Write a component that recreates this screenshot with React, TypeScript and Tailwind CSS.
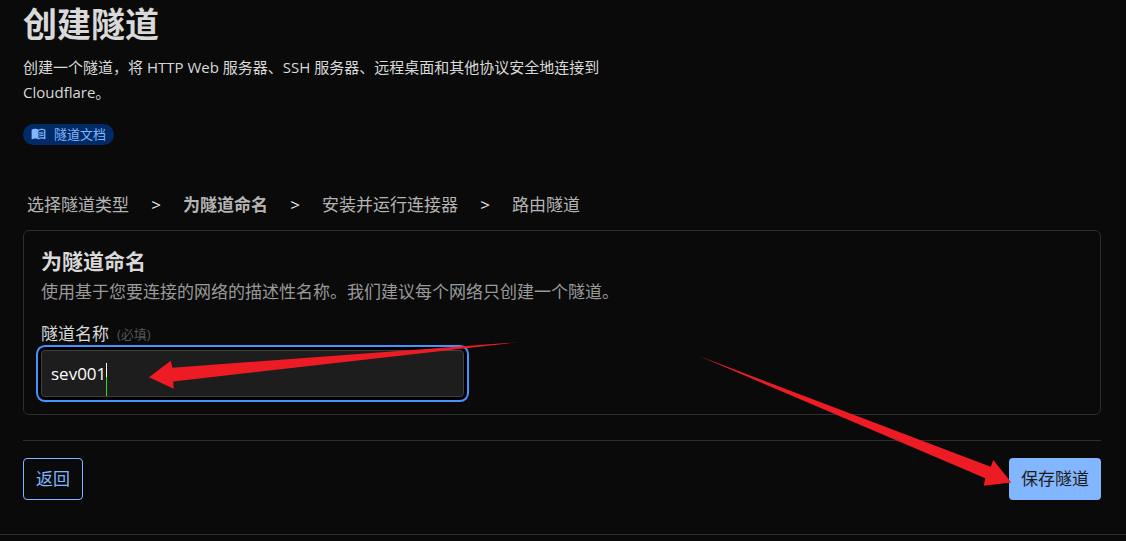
import { useState } from "react";
import { MdMenuBook } from "react-icons/md";

const steps = ["选择隧道类型", "为隧道命名", "安装并运行连接器", "路由隧道"];
const currentStep = 1;

function Steps() {
  return (
    <nav aria-label="步骤">
      <ol className="flex flex-wrap items-center pl-1 text-[17px] leading-6 text-[#b4b4b4]">
        {steps.map((step, index) => (
          <li
            key={step}
            className="flex items-center"
            aria-current={index === currentStep ? "step" : undefined}
          >
            {index > 0 && (
              <span aria-hidden="true" className="w-[54px] text-center text-[#e8e8e8]">
                &gt;
              </span>
            )}
            <span className={index === currentStep ? "font-bold" : "font-normal"}>{step}</span>
          </li>
        ))}
      </ol>
    </nav>
  );
}

function NameField() {
  const [name, setName] = useState("sev001");
  return (
    <div>
      <label htmlFor="tunnel-name" className="flex items-center gap-2 text-[17px] leading-6 text-[#d9d9d9]">
        隧道名称
        <span className="text-[13px] text-[#565656]">(必填)</span>
      </label>
      <div className="relative mt-1 max-w-[423px]">
        <input
          id="tunnel-name"
          type="text"
          required
          value={name}
          onChange={(event) => setName(event.target.value)}
          className="block h-[47px] w-full rounded border border-[#404040] bg-[#1d1d1d] px-[9px] text-[17px] text-white shadow-[0_0_0_3px_#000000,0_0_0_5px_#4693ff] outline-none"
        />
        <span aria-hidden="true" className="absolute top-[13px] left-[65px] flex w-px flex-col">
          <span className="h-[14px] bg-white" />
          <span className="h-[19px] bg-[#1fe01f]" />
        </span>
        <svg
          aria-hidden="true"
          viewBox="0 0 371 48"
          className="pointer-events-none absolute -top-2 left-[108px] h-12 w-[371px] max-w-none"
        >
          <polygon
            points="371,0 23.5,25.7 21.7,18.7 0,35.3 24.7,46.7 24.2,39.5"
            fill="#ed1c24"
          />
        </svg>
      </div>
    </div>
  );
}

export default function App() {
  return (
    <div className="min-h-screen bg-[#0a0a0a] font-['Open_Sans','Noto_Sans_CJK_SC',sans-serif] text-[#d9d9d9]">
      <main className="border-b border-[#2e2e2e] pt-1 pr-[25px] pb-[34px] pl-[23px]">
        <header>
          <h1 className="text-[34px] leading-10 font-bold">创建隧道</h1>
          <p className="mt-[11px] max-w-[590px] text-[15px] leading-[25px]">
            创建一个隧道，将 HTTP Web 服务器、SSH 服务器、远程桌面和其他协议安全地连接到 Cloudflare。
          </p>
          <a
            href="#docs"
            className="mt-[19px] flex h-[21px] w-fit items-center gap-2 rounded-full bg-[#002b66] px-2 pb-0.5 text-[13px] leading-5 text-[#82b6ff]"
          >
            <MdMenuBook className="size-[15px]" aria-hidden="true" />
            隧道文档
          </a>
        </header>

        <div className="mt-12">
          <Steps />
        </div>

        <section className="mt-[13px] rounded-md border border-[#2e2e2e] px-[17px] pt-4 pb-[17px]">
          <h2 className="text-[21px] leading-7 font-bold">为隧道命名</h2>
          <p className="mt-[5px] mb-[18px] text-[17px] leading-6 text-[#999999]">
            使用基于您要连接的网络的描述性名称。我们建议每个网络只创建一个隧道。
          </p>
          <NameField />
        </section>

        <div className="mt-[25px] flex justify-between border-t border-[#2e2e2e] pt-[17px]">
          <button
            type="button"
            className="h-[42px] rounded border border-[#82b6ff] px-3 text-[17px] text-[#82b6ff]"
          >
            返回
          </button>
          <div className="relative">
            <button
              type="button"
              className="h-[42px] rounded bg-[#82b6ff] px-3 text-[17px] text-[#1d1d1d]"
            >
              保存隧道
            </button>
            <svg
              aria-hidden="true"
              viewBox="0 0 313 131"
              className="pointer-events-none absolute -top-[102px] right-[89px] h-[131px] w-[313px] max-w-none"
            >
              <polygon
                points="0,0 291.7,110.7 294.3,104 312.3,126.5 284.7,129.7 286.3,122.3"
                fill="#ed1c24"
              />
            </svg>
          </div>
        </div>
      </main>
    </div>
  );
}
